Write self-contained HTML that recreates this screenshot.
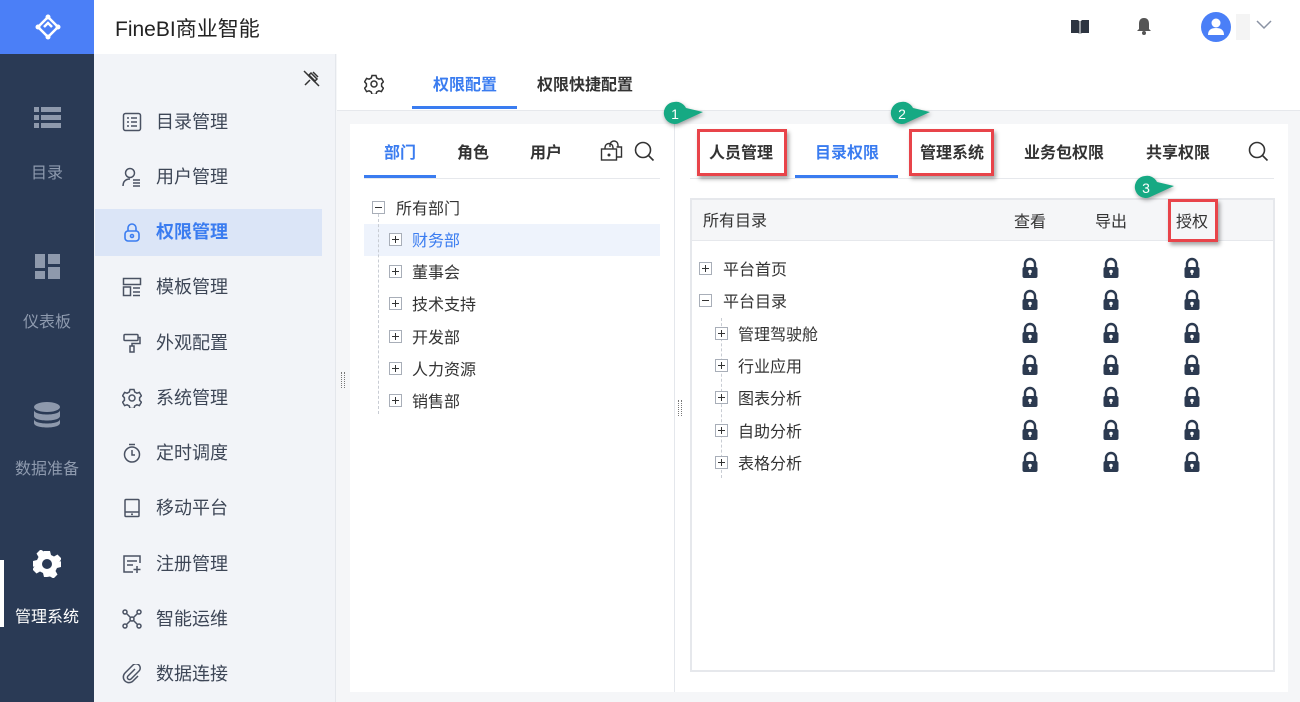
<!DOCTYPE html>
<html><head><meta charset="utf-8"><style>
*{margin:0;padding:0;box-sizing:border-box}
body{width:1300px;height:702px;overflow:hidden;position:relative;background:#f5f6f8;font-family:"Liberation Sans","Noto Sans CJK SC",sans-serif;color:#333}
.a{position:absolute}
.nav{left:0;top:0;width:94px;height:702px;background:#2a3a55}
.logo{left:0;top:0;width:94px;height:54px;background:#4b7ff7}
.nt{width:94px;text-align:center;font-size:16px;color:#8e9aae;transform:translateY(-3px)}
.hdr{left:94px;top:0;width:1206px;height:54px;background:#fff}
.side{left:94px;top:54px;width:242px;height:648px;background:#f2f4f8;border-right:1px solid #e4e7ec}
.mi{left:94px;width:228px;height:47px;font-size:18px;color:#3d4656;line-height:47px;padding-left:62px}
.mi svg{position:absolute;left:28px;top:13px}
.t{font-size:16px;font-weight:bold;color:#333;white-space:nowrap;transform:translateY(-3px)}
.box{width:13px;height:13px;border:1px solid #a8aeb8;background:#fff}
.box:before{content:"";position:absolute;left:2px;top:5px;width:7px;height:1px;background:#333}
.plus:after{content:"";position:absolute;left:5px;top:2px;width:1px;height:7px;background:#333}
.tx{font-size:16px;color:#333;white-space:nowrap;transform:translateY(-3px)}
.red{border:3px solid #e8444a;box-shadow:2px 3px 4px rgba(0,0,0,.35)}
</style></head><body>
<div class="a nav"></div>
<div class="a logo"><svg class="a" style="left:35px;top:14px" width="26" height="26" viewBox="0 0 26 26"><g fill="none" stroke="#fff" stroke-width="2.5"><path d="M13 3L3 13L13 23L23 13Z M9 13L13 9L17 13"/></g><circle cx="13" cy="3" r="2.5" fill="#fff"/><circle cx="3" cy="13" r="2.5" fill="#fff"/><circle cx="13" cy="23" r="2.5" fill="#fff"/><circle cx="23" cy="13" r="2.5" fill="#fff"/></svg></div>
<svg class="a" style="left:34px;top:106px" width="27" height="24"><g fill="#8e99ac"><rect x="0" y="1" width="5" height="5"/><rect x="7" y="1" width="20" height="5"/><rect x="0" y="9" width="5" height="5"/><rect x="7" y="9" width="20" height="5"/><rect x="0" y="17" width="5" height="5"/><rect x="7" y="17" width="20" height="5"/></g></svg>
<div class="a nt" style="top:162px">目录</div>
<svg class="a" style="left:35px;top:254px" width="25" height="25"><g fill="#8e99ac"><rect x="0" y="0" width="10" height="14"/><rect x="13" y="0" width="12" height="10"/><rect x="0" y="17" width="10" height="8"/><rect x="13" y="13" width="12" height="12"/></g></svg>
<div class="a nt" style="top:311px">仪表板</div>
<svg class="a" style="left:34px;top:402px" width="26" height="26"><g fill="#8e99ac"><ellipse cx="13" cy="5" rx="13" ry="5"/><path d="M0 8c0 6 26 6 26 0v6c0 6-26 6-26 0z"/><path d="M0 17c0 6 26 6 26 0v4c0 6-26 6-26 0z"/></g></svg>
<div class="a nt" style="top:458px">数据准备</div>
<svg class="a" style="left:33px;top:550px" width="28" height="28" viewBox="0 0 28 28"><path fill="#fff" d="M11 1h6l1 4 3 1.5 3.5-2 4 4-2 3.5L28 11v6l-4 1-1.5 3 2 3.5-4 4-3.5-2L14 27h-3l-1-4-3-1.5-3.5 2-4-4 2-3.5L0 17v-6l4-1 1.5-3-2-3.5 4-4 3.5 2z"/><circle cx="14" cy="14" r="5" fill="#2a3a55"/></svg>
<div class="a" style="left:0;top:560px;width:4px;height:67px;background:#fff"></div>
<div class="a nt" style="top:606px;color:#fff">管理系统</div>
<div class="a hdr"></div>
<div class="a" style="left:115px;top:13px;font-size:21px;color:#222">FineBI商业智能</div>
<svg class="a" style="left:1071px;top:19px" width="18" height="16"><path d="M0 1h7l2 2 2-2h7v13h-7l-2 1-2-1H0z" fill="#2d3440"/><path d="M9 3v12" stroke="#fff" stroke-width="1"/></svg>
<svg class="a" style="left:1136px;top:17px" width="16" height="19"><path d="M8 1c4 0 5 3 5 6v5l2 2H1l2-2V7c0-3 1-6 5-6z" fill="#555"/><circle cx="8" cy="16" r="2" fill="#555"/></svg>
<div class="a" style="left:1201px;top:12px;width:30px;height:30px;border-radius:50%;background:#4a7ff7"></div>
<svg class="a" style="left:1207px;top:17px" width="18" height="19"><circle cx="9" cy="6" r="4.5" fill="#fff"/><path d="M1 18c0-5 3-7 8-7s8 2 8 7z" fill="#fff"/></svg>
<div class="a" style="left:1236px;top:14px;width:14px;height:26px;background:#f4f4f4"></div>
<svg class="a" style="left:1256px;top:20px" width="16" height="10"><path d="M1 1l7 7 7-7" fill="none" stroke="#8a93a3" stroke-width="1.5"/></svg>
<div class="a side"></div>
<svg class="a" style="left:302px;top:69px" width="19" height="19"><g fill="none" stroke="#333" stroke-width="1.5"><path d="M3 16L8 11M6 6l7 7M9 4l6 6-2 2-6-6zM11 3l5 5"/><path d="M2 2l15 15"/></g></svg>
<div class="a" style="left:95px;top:209px;width:227px;height:47px;background:#dbe5f7"></div>
<div class="a mi" style="top:99px"><svg width="20" height="20"><g fill="none" stroke="#4a5263" stroke-width="1.5"><rect x="1.5" y="1.5" width="17" height="17" rx="2"/><path d="M5 6h2M9 6h6M5 10h2M9 10h6M5 14h2M9 14h6"/></g></svg>目录管理</div>
<div class="a mi" style="top:154px"><svg width="20" height="20"><g fill="none" stroke="#4a5263" stroke-width="1.5"><circle cx="8" cy="6" r="4.5"/><path d="M1 19c0-5 3-7 7-7M11 13h7M11 16h7M11 19h7"/></g></svg>用户管理</div>
<div class="a mi" style="top:209px;color:#3a7cf0;font-weight:bold"><svg width="20" height="20"><g fill="none" stroke="#3a7cf0" stroke-width="1.6"><path d="M6 9V6a4 4 0 0 1 8 0v3"/><rect x="3" y="9" width="14" height="10" rx="3"/><circle cx="10" cy="14" r="1.5"/></g></svg>权限管理</div>
<div class="a mi" style="top:264px"><svg width="20" height="20"><g fill="none" stroke="#4a5263" stroke-width="1.5"><rect x="1.5" y="1.5" width="17" height="6"/><rect x="1.5" y="10" width="7" height="8.5"/><path d="M11 11h7M11 15h7M11 18.5h7"/></g></svg>模板管理</div>
<div class="a mi" style="top:320px"><svg width="20" height="20"><g fill="none" stroke="#4a5263" stroke-width="1.5"><rect x="2" y="1.5" width="14" height="6" rx="1"/><path d="M16 4.5h2v6h-8v3"/><rect x="8" y="13" width="4" height="6"/></g></svg>外观配置</div>
<div class="a mi" style="top:375px"><svg width="20" height="20"><g fill="none" stroke="#4a5263" stroke-width="1.5"><path d="M8 1.5h4l.7 2.5 2.2 1.2 2.5-.8 2 3.4-1.8 1.9v2.6l1.8 1.9-2 3.4-2.5-.8-2.2 1.2-.7 2.5H8l-.7-2.5-2.2-1.2-2.5.8-2-3.4 1.8-1.9V9.7L.6 7.8l2-3.4 2.5.8L7.3 4z"/><circle cx="10" cy="10" r="3"/></g></svg>系统管理</div>
<div class="a mi" style="top:430px"><svg width="20" height="20"><g fill="none" stroke="#4a5263" stroke-width="1.5"><circle cx="10" cy="11.5" r="7.5"/><path d="M7 1.5h6M10 7v5h3"/></g></svg>定时调度</div>
<div class="a mi" style="top:485px"><svg width="20" height="20"><g fill="none" stroke="#4a5263" stroke-width="1.5"><rect x="3" y="1.5" width="14" height="17" rx="1"/><path d="M3 14h14"/></g><circle cx="10" cy="16.3" r="1" fill="#4a5263"/></svg>移动平台</div>
<div class="a mi" style="top:541px"><svg width="20" height="20"><g fill="none" stroke="#4a5263" stroke-width="1.5"><path d="M18 9V2H2v16h9"/><path d="M5 7h10M5 11h6M15 12v7M11.5 15.5h7"/></g></svg>注册管理</div>
<div class="a mi" style="top:596px"><svg width="20" height="20"><g fill="none" stroke="#4a5263" stroke-width="1.5"><circle cx="3" cy="3" r="2"/><circle cx="17" cy="3" r="2"/><circle cx="3" cy="17" r="2"/><circle cx="17" cy="17" r="2"/><circle cx="10" cy="10" r="2"/><path d="M4.5 4.5l4 4M15.5 4.5l-4 4M4.5 15.5l4-4M15.5 15.5l-4-4"/></g></svg>智能运维</div>
<div class="a mi" style="top:651px"><svg width="20" height="20"><g fill="none" stroke="#4a5263" stroke-width="1.5"><path d="M13 5l-7 7a2 2 0 0 0 3 3l8-8a4 4 0 0 0-6-6L3 9a5.5 5.5 0 0 0 8 8l5-5"/></g></svg>数据连接</div>
<div class="a" style="left:337px;top:54px;width:963px;height:57px;background:#fff;border-bottom:1px solid #e6e8ec"></div>
<svg class="a" style="left:364px;top:74px" width="20" height="20"><g fill="none" stroke="#333" stroke-width="1.5"><path d="M8 1.5h4l.7 2.5 2.2 1.2 2.5-.8 2 3.4-1.8 1.9v2.6l1.8 1.9-2 3.4-2.5-.8-2.2 1.2-.7 2.5H8l-.7-2.5-2.2-1.2-2.5.8-2-3.4 1.8-1.9V9.7L.6 7.8l2-3.4 2.5.8L7.3 4z"/><circle cx="10" cy="10" r="3"/></g></svg>
<div class="a t" style="left:433px;top:74px;color:#3a7cf0">权限配置</div>
<div class="a" style="left:412px;top:106px;width:105px;height:3px;background:#3a7cf0"></div>
<div class="a t" style="left:537px;top:74px">权限快捷配置</div>
<div class="a" style="left:350px;top:124px;width:938px;height:568px;background:#fff"></div>
<div class="a" style="left:674px;top:124px;width:1px;height:568px;background:#e4e7ec"></div>
<div class="a" style="left:341px;top:372px;width:4px;height:16px;border-left:1px dotted #777;border-right:1px dotted #777"></div>
<div class="a" style="left:678px;top:400px;width:4px;height:16px;border-left:1px dotted #777;border-right:1px dotted #777"></div>
<div class="a t" style="left:384px;top:142px;color:#3a7cf0">部门</div>
<div class="a t" style="left:457px;top:142px">角色</div>
<div class="a t" style="left:530px;top:142px">用户</div>
<svg class="a" style="left:600px;top:140px" width="23" height="22"><g fill="none" stroke="#333" stroke-width="1.4"><path d="M10 7V5a4 4 0 0 1 8 0v2M5 9V7.5a4 4 0 0 1 8 0V9"/><rect x="1.5" y="9" width="15" height="11"/><path d="M16.5 7h5v10h-5"/></g><circle cx="9" cy="15" r="1.5" fill="#333"/></svg>
<svg class="a" style="left:634px;top:141px" width="21" height="21"><g fill="none" stroke="#333" stroke-width="1.6"><circle cx="9" cy="9" r="7.5"/><path d="M14.5 14.5l5 5"/></g></svg>
<div class="a" style="left:364px;top:178px;width:296px;height:1px;background:#e6e8ec"></div>
<div class="a" style="left:364px;top:175px;width:72px;height:3px;background:#3a7cf0"></div>
<div class="a" style="left:364px;top:224px;width:296px;height:32px;background:#eef3fc"></div>
<div class="a" style="left:378px;top:214px;height:200px;border-left:1px dashed #c8ccd3"></div>
<div class="a box" style="left:372px;top:201px"></div><div class="a tx" style="left:396px;top:198px">所有部门</div>
<div class="a box plus" style="left:389px;top:233px"></div><div class="a tx" style="left:412px;top:230px;color:#3a7cf0">财务部</div>
<div class="a box plus" style="left:389px;top:265px"></div><div class="a tx" style="left:412px;top:262px">董事会</div>
<div class="a box plus" style="left:389px;top:297px"></div><div class="a tx" style="left:412px;top:294px">技术支持</div>
<div class="a box plus" style="left:389px;top:330px"></div><div class="a tx" style="left:412px;top:327px">开发部</div>
<div class="a box plus" style="left:389px;top:362px"></div><div class="a tx" style="left:412px;top:359px">人力资源</div>
<div class="a box plus" style="left:389px;top:394px"></div><div class="a tx" style="left:412px;top:391px">销售部</div>
<div class="a t" style="left:709px;top:142px">人员管理</div>
<div class="a t" style="left:815px;top:142px;color:#3a7cf0">目录权限</div>
<div class="a t" style="left:920px;top:142px">管理系统</div>
<div class="a t" style="left:1024px;top:142px">业务包权限</div>
<div class="a t" style="left:1146px;top:142px">共享权限</div>
<svg class="a" style="left:1248px;top:141px" width="21" height="21"><g fill="none" stroke="#333" stroke-width="1.6"><circle cx="9" cy="9" r="7.5"/><path d="M14.5 14.5l5 5"/></g></svg>
<div class="a" style="left:690px;top:178px;width:584px;height:1px;background:#e6e8ec"></div>
<div class="a" style="left:795px;top:175px;width:103px;height:3px;background:#3a7cf0"></div>
<div class="a" style="left:690px;top:198px;width:585px;height:474px;border:2px solid #e6e8ec;background:#fff"></div>
<div class="a" style="left:692px;top:200px;width:581px;height:41px;background:#f5f6f8;border-bottom:1px solid #e6e8ec"></div>
<div class="a tx" style="left:703px;top:210px">所有目录</div>
<div class="a tx" style="left:1014px;top:211px">查看</div>
<div class="a tx" style="left:1095px;top:211px">导出</div>
<div class="a tx" style="left:1176px;top:211px">授权</div>
<div class="a" style="left:721px;top:318px;height:160px;border-left:1px dashed #c8ccd3"></div>
<div class="a box plus" style="left:699px;top:262px"></div><div class="a tx" style="left:723px;top:259px">平台首页</div>
<div class="a box" style="left:699px;top:294px"></div><div class="a tx" style="left:723px;top:291px">平台目录</div>
<div class="a box plus" style="left:715px;top:327px"></div><div class="a tx" style="left:738px;top:324px">管理驾驶舱</div>
<div class="a box plus" style="left:715px;top:359px"></div><div class="a tx" style="left:738px;top:356px">行业应用</div>
<div class="a box plus" style="left:715px;top:391px"></div><div class="a tx" style="left:738px;top:388px">图表分析</div>
<div class="a box plus" style="left:715px;top:424px"></div><div class="a tx" style="left:738px;top:421px">自助分析</div>
<div class="a box plus" style="left:715px;top:456px"></div><div class="a tx" style="left:738px;top:453px">表格分析</div>
<svg class="a" style="left:0;top:0" width="1300" height="702">
<defs><g id="L"><path d="M-5 0v-4a5 5 0 0 1 10 0v4" fill="none" stroke="#2c3a50" stroke-width="2.4"/><rect x="-7.5" y="-1" width="15" height="11" rx="2" fill="#2c3a50"/><circle cx="0" cy="3.5" r="1.8" fill="#fff"/><rect x="-0.7" y="3.5" width="1.4" height="3.5" fill="#fff"/></g></defs>
<use href="#L" x="1030" y="268"/><use href="#L" x="1111" y="268"/><use href="#L" x="1192" y="268"/>
<use href="#L" x="1030" y="300"/><use href="#L" x="1111" y="300"/><use href="#L" x="1192" y="300"/>
<use href="#L" x="1030" y="333"/><use href="#L" x="1111" y="333"/><use href="#L" x="1192" y="333"/>
<use href="#L" x="1030" y="365"/><use href="#L" x="1111" y="365"/><use href="#L" x="1192" y="365"/>
<use href="#L" x="1030" y="397"/><use href="#L" x="1111" y="397"/><use href="#L" x="1192" y="397"/>
<use href="#L" x="1030" y="430"/><use href="#L" x="1111" y="430"/><use href="#L" x="1192" y="430"/>
<use href="#L" x="1030" y="462"/><use href="#L" x="1111" y="462"/><use href="#L" x="1192" y="462"/>
<g fill="#16a983" style="filter:drop-shadow(1px 2px 2px rgba(0,0,0,.35))">
<path d="M674 102a11 11 0 1 0 4 21.5L703 112 686 108a11 11 0 0 0-12-6z"/>
<path d="M901 102a11 11 0 1 0 4 21.5L930 112 913 108a11 11 0 0 0-12-6z"/>
<path d="M1145 176a11 11 0 1 0 4 21.5L1174 186 1157 182a11 11 0 0 0-12-6z"/>
</g>
<g fill="#fff" font-family="Liberation Sans" font-size="14" text-anchor="middle"><text x="675" y="119">1</text><text x="902" y="119">2</text><text x="1146" y="193">3</text></g>
</svg>
<div class="a red" style="left:697px;top:129px;width:90px;height:47px"></div>
<div class="a red" style="left:909px;top:129px;width:85px;height:47px"></div>
<div class="a red" style="left:1168px;top:199px;width:50px;height:43px"></div>
</body></html>
